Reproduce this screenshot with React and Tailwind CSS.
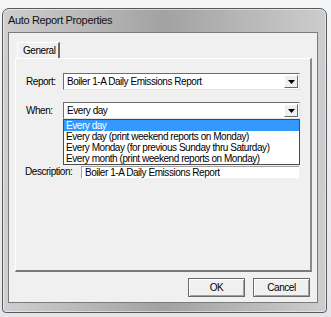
export default function App() {
  const options = [
    'Every day',
    'Every day (print weekend reports on Monday)',
    'Every Monday (for previous Sunday thru Saturday)',
    'Every month (print weekend reports on Monday)',
  ]

  const Arrow = () => (
    <div className="w-[14px] h-full bg-[#f0f0f0] border-t border-l border-t-white border-l-white border-b border-r border-b-[#696969] border-r-[#696969] flex items-center justify-center">
      <svg width="7" height="4" viewBox="0 0 7 4"><path d="M0 0H7L3.5 4Z" fill="#000" /></svg>
    </div>
  )

  const Combo = ({ value, children }) => (
    <div className="relative w-[237px] h-[17px] bg-white border border-t-[#6d6d6d] border-l-[#6d6d6d] border-b-[#e3e3e3] border-r-[#e3e3e3] flex items-stretch p-[1px]">
      <div className="flex-1 pl-[2px] flex items-center">{value}</div>
      <Arrow />
      {children}
    </div>
  )

  return (
    <div className="w-[331px] h-[317px] overflow-hidden bg-gradient-to-b from-[#f4f5f7] to-[#e4e6ea] pt-[8px] pl-[2px] text-[10px] tracking-[-0.45px] text-black leading-none"
      style={{ fontFamily: '"Liberation Sans", Arial, sans-serif' }}>
      <div className="w-[325px] h-[305px] rounded-t-[7px] rounded-b-[4px] border border-[#5a5a5a] bg-gradient-to-r from-[#cfcfcf] via-[#a2a2a2] to-[#cdcdcd] pl-[5px] pr-[8px] pb-[9px] flex flex-col shadow-[inset_0_0_0_1px_rgba(255,255,255,0.5)]">
        <div className="h-[23px] flex items-center text-[11px] tracking-[-0.35px] text-[#111]">Auto Report Properties</div>

        <div className="h-[271px] bg-[#f0f0f0] border border-[#7a7a7a] flex flex-col">
          <div className="mt-[9px] ml-[6px] w-[297px] flex flex-col">
            <div className="pl-[2px] flex">
              <div className="w-[43px] h-[16px] border-t border-l border-white border-r-2 border-r-[#6a6a6a] flex items-center pl-[5px]">General</div>
            </div>
            <div className="h-[214px] border-t border-l border-white border-r-2 border-b-2 border-r-[#8a8a8a] border-b-[#7a7a7a] flex flex-col pl-[10px]">
              <div className="mt-[14px] flex items-center">
                <div className="w-[37px]">Report:</div>
                <Combo value="Boiler 1-A Daily Emissions Report" />
              </div>
              <div className="mt-[12px] flex items-center">
                <div className="w-[37px]">When:</div>
                <Combo value="Every day">
                  <div className="absolute left-[-1px] top-[16px] w-[237px] h-[46px] bg-white border border-[#4a4a4a] z-10 flex flex-col">
                    {options.map((o, i) => (
                      <div key={i} className={`h-[11px] flex items-center pl-[2px] ${i === 0 ? 'bg-[#3399ff] text-white' : ''}`}>{o}</div>
                    ))}
                  </div>
                </Combo>
              </div>
              <div className="mt-[47px] -ml-[1px] flex items-center">
                <div className="w-[56px]">Description:</div>
                <div className="w-[218px] h-[12px] bg-white border-t border-l border-[#a0a0a0] pl-[3px] flex items-center">Boiler 1-A Daily Emissions Report</div>
              </div>
            </div>
          </div>

          <div className="mt-[6px] pr-[7px] flex justify-end gap-[8px]">
            {['OK', 'Cancel'].map(b => (
              <div key={b} className="w-[57px] h-[19px] border border-[#6a6a6a] bg-[#f0f0f0] shadow-[inset_1px_1px_0_#fff,inset_-1px_-1px_0_#a0a0a0] flex items-center justify-center text-[10px]">{b}</div>
            ))}
          </div>
        </div>
      </div>
    </div>
  )
}
